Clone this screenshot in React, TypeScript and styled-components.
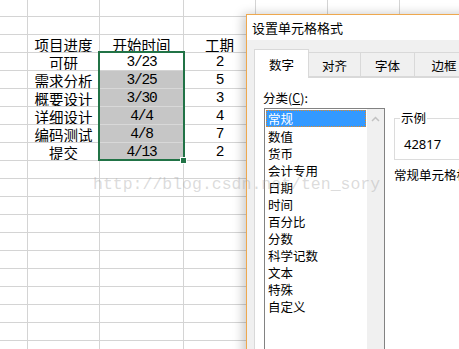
import React from "react";
import styled, { createGlobalStyle } from "styled-components";

const Global = createGlobalStyle`
  html, body { margin: 0; padding: 0; background: #fff; overflow: hidden; }
  body { width: 459px; height: 349px; }
  #root { width: 459px; height: 349px; position: relative; overflow: hidden; }
`;

const CJK = `"Noto Sans CJK SC", "Noto Sans", sans-serif`;

const Page = styled.div`
  position: relative;
  width: 459px;
  height: 349px;
  overflow: hidden;
  background: #fff;
`;

const COLS = [28, 72, 84, 72, 72, 72, 72];

const Sheet = styled.div`
  display: grid;
  grid-template-columns: ${COLS.map((c) => c + "px").join(" ")};
  grid-template-rows: 17px;
  grid-auto-rows: 18px;
`;

const Cell = styled.div<{ $shade?: boolean; $mono?: boolean }>`
  box-sizing: border-box;
  border-right: 1px solid #d4d4d4;
  border-bottom: 1px solid ${(p) => (p.$shade ? "#d8d8d8" : "#d4d4d4")};
  background: ${(p) => (p.$shade ? "#c6c6c6" : "#fff")};
  display: flex;
  align-items: center;
  justify-content: center;
  overflow: hidden;
  white-space: nowrap;
  color: #000;
  font-family: ${(p) => (p.$mono ? `"Liberation Mono", monospace` : CJK)};
  font-size: 14.5px;
  letter-spacing: ${(p) => (p.$mono ? "-1.2px" : "0")};
  line-height: 17px;
  padding-top: 1px;
`;

const Selection = styled.div`
  position: absolute;
  left: 98px;
  top: 51px;
  width: 87px;
  height: 110px;
  box-sizing: border-box;
  border: 2px solid #217346;
  pointer-events: none;
`;

const FillHandle = styled.div`
  position: absolute;
  left: 180px;
  top: 157px;
  width: 5px;
  height: 5px;
  background: #217346;
  border: 1px solid #fff;
`;

const Dialog = styled.div`
  position: absolute;
  left: 246px;
  top: 14px;
  width: 260px;
  height: 360px;
  box-sizing: border-box;
  border: 1px solid #eea84e;
  background: #f0f0f0;
  box-shadow: -3px 0 10px rgba(0, 0, 0, 0.22);
  display: flex;
  flex-direction: column;
  font-family: ${CJK};
`;

const TitleBar = styled.div`
  height: 25px;
  background: #fff;
  display: flex;
  align-items: center;
  padding-left: 5px;
  font-size: 13px;
  color: #000;
  white-space: nowrap;
`;

const Body = styled.div`
  flex: 1;
  padding: 8px 0 0 7px;
  display: flex;
  flex-direction: column;
`;

const TabStrip = styled.div`
  display: flex;
  align-items: flex-end;
  height: 29px;
  position: relative;
  z-index: 1;
`;

const Tab = styled.div<{ $active?: boolean; $w: number }>`
  box-sizing: border-box;
  width: ${(p) => p.$w}px;
  height: ${(p) => (p.$active ? 29 : 25)}px;
  margin-bottom: ${(p) => (p.$active ? -1 : 0)}px;
  background: ${(p) => (p.$active ? "#fff" : "#f0f0f0")};
  border: 1px solid #d9d9d9;
  border-bottom: ${(p) => (p.$active ? "none" : "1px solid #d9d9d9")};
  margin-left: ${(p) => (p.$active ? 0 : -1)}px;
  display: flex;
  align-items: center;
  justify-content: center;
  font-size: 12.5px;
  color: #000;
  white-space: nowrap;
  padding-top: ${(p) => (p.$active ? 0 : 1)}px;
`;

const Panel = styled.div`
  flex: 1;
  background: #fff;
  border: 1px solid #d9d9d9;
  display: flex;
  padding: 12px 0 0 8px;
  gap: 9px;
`;

const LeftCol = styled.div`
  display: flex;
  flex-direction: column;
  width: 122px;
`;

const Label = styled.div`
  font-size: 12.5px;
  line-height: 15px;
  height: 18px;
  color: #000;
  white-space: nowrap;
  u { text-decoration: underline; text-underline-offset: 1px; }
`;

const ListBox = styled.div`
  margin-left: 1px;
  height: 260px;
  box-sizing: border-box;
  border: 1px solid #828282;
  display: flex;
  background: #fff;
`;

const Items = styled.div`
  flex: 1;
  padding: 1px 1px 0 1px;
  display: flex;
  flex-direction: column;
`;

const Item = styled.div<{ $sel?: boolean }>`
  height: 17px;
  line-height: 17px;
  padding-left: 2px;
  font-size: 12.5px;
  color: ${(p) => (p.$sel ? "#fff" : "#000")};
  background: ${(p) => (p.$sel ? "#3399ff" : "transparent")};
  outline: ${(p) => (p.$sel ? "1px dotted #e08a2a" : "none")};
  outline-offset: -1px;
  white-space: nowrap;
  margin-bottom: ${(p) => (p.$sel ? 1 : 0)}px;
`;

const ScrollBar = styled.div`
  width: 17px;
  background: #f0f0f0;
  display: flex;
  justify-content: center;
  padding-top: 7px;
  box-sizing: border-box;
`;

const RightCol = styled.div`
  flex: 1;
  display: flex;
  flex-direction: column;
  padding-top: 21px;
  min-width: 0;
`;

const Sample = styled.fieldset`
  margin: 0;
  padding: 0 0 0 9px;
  height: 49px;
  box-sizing: border-box;
  border: 1px solid #dcdcdc;
  border-right: none;
`;

const Legend = styled.legend`
  padding: 0 1px;
  margin-left: -4px;
  font-size: 12.5px;
  line-height: 14px;
  color: #000;
`;

const SampleValue = styled.div`
  font-family: "Noto Sans", "Liberation Sans", sans-serif;
  font-size: 13px;
  line-height: 16px;
  color: #000;
  padding-top: 11px;
`;

const Desc = styled.div`
  margin-top: 7px;
  font-size: 12.5px;
  line-height: 16px;
  color: #000;
  white-space: nowrap;
`;

const Watermark = styled.div`
  position: absolute;
  left: 93px;
  top: 176px;
  font-family: "Liberation Mono", monospace;
  font-size: 16.5px;
  line-height: 17px;
  color: rgba(170, 170, 170, 0.42);
  white-space: nowrap;
  pointer-events: none;
`;

type Row = [string, string, string];
const data: Row[] = [
  ["项目进度", "开始时间", "工期"],
  ["可研", "3/23", "2"],
  ["需求分析", "3/25", "5"],
  ["概要设计", "3/30", "3"],
  ["详细设计", "4/4", "4"],
  ["编码测试", "4/8", "7"],
  ["提交", "4/13", "2"],
];

const categories = [
  "常规",
  "数值",
  "货币",
  "会计专用",
  "日期",
  "时间",
  "百分比",
  "分数",
  "科学记数",
  "文本",
  "特殊",
  "自定义",
];

const tabs: { label: string; w: number }[] = [
  { label: "数字", w: 55 },
  { label: "对齐", w: 53 },
  { label: "字体", w: 55 },
  { label: "边框", w: 60 },
];

export default function App() {
  const rows: React.ReactNode[] = [];
  const totalRows = 20;
  for (let r = 0; r < totalRows; r++) {
    const d = r >= 2 && r <= 8 ? data[r - 2] : null;
    for (let c = 0; c < COLS.length; c++) {
      let text = "";
      let mono = false;
      let shade = false;
      if (d && c >= 1 && c <= 3) {
        text = d[c - 1];
        mono = r > 2 && c >= 2;
      }
      if (c === 2 && r >= 4 && r <= 8) shade = true;
      rows.push(
        <Cell key={`${r}-${c}`} $shade={shade} $mono={mono}>
          {text}
        </Cell>
      );
    }
  }

  return (
    <Page>
      <Global />
      <Sheet>{rows}</Sheet>
      <Selection />
      <FillHandle />
      <Dialog>
        <TitleBar>设置单元格格式</TitleBar>
        <Body>
          <TabStrip>
            {tabs.map((t, i) => (
              <Tab key={t.label} $active={i === 0} $w={t.w}>
                {t.label}
              </Tab>
            ))}
          </TabStrip>
          <Panel>
            <LeftCol>
              <Label>
                分类(<u>C</u>):
              </Label>
              <ListBox>
                <Items>
                  {categories.map((c, i) => (
                    <Item key={c} $sel={i === 0}>
                      {c}
                    </Item>
                  ))}
                </Items>
                <ScrollBar>
                  <svg width="9" height="6" viewBox="0 0 9 6">
                    <path d="M1 5 L4.5 1.5 L8 5" fill="none" stroke="#c2c2c2" strokeWidth="1.5" />
                  </svg>
                </ScrollBar>
              </ListBox>
            </LeftCol>
            <RightCol>
              <Sample>
                <Legend>示例</Legend>
                <SampleValue>42817</SampleValue>
              </Sample>
              <Desc>常规单元格格式不包含任何特定的数字格式。</Desc>
            </RightCol>
          </Panel>
        </Body>
      </Dialog>
      <Watermark>http://blog.csdn.net/ten_sory</Watermark>
    </Page>
  );
}
